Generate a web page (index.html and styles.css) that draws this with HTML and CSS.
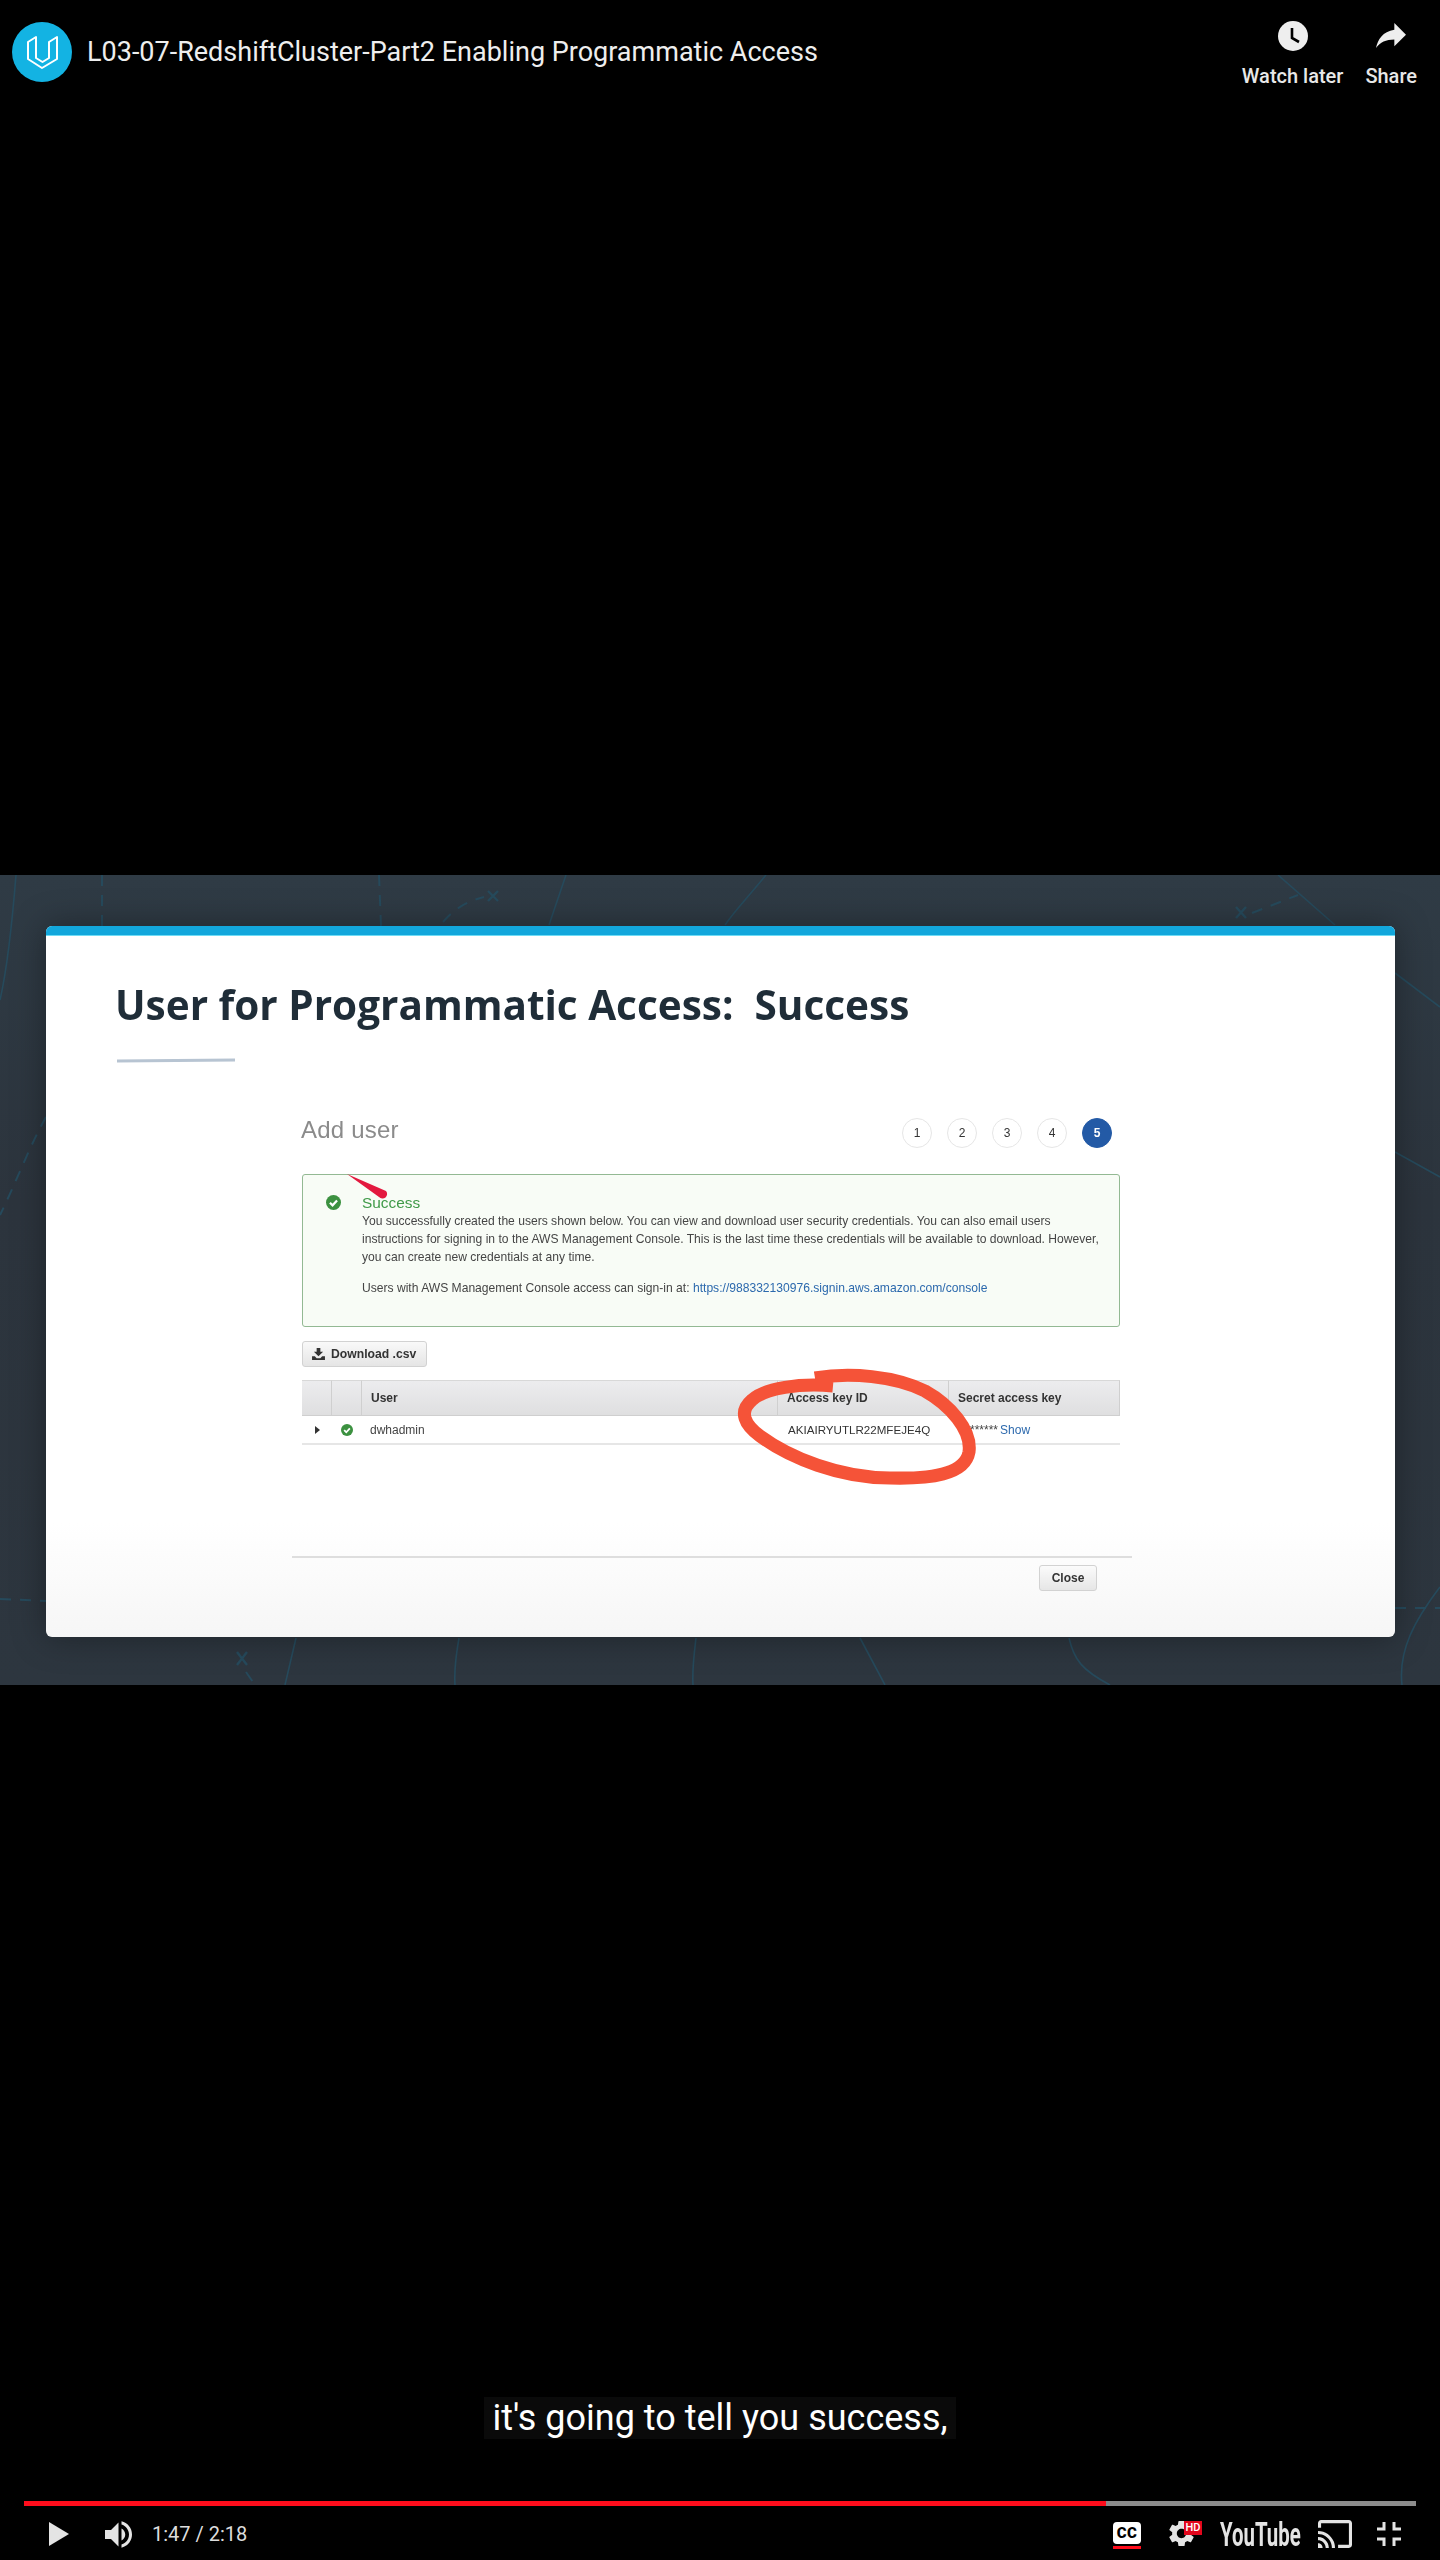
FILE: index.html
```html
<!DOCTYPE html>
<html lang="en">
<head>
<meta charset="utf-8">
<title>L03-07-RedshiftCluster-Part2 Enabling Programmatic Access</title>
<link rel="stylesheet" href="styles.css">
</head>
<body>
<div class="player">
  <main class="slide">
    <svg class="decor" viewBox="0 0 1440 810" aria-hidden="true">
      <g class="lines">
        <path d="M16 0C12 50 8 90 0 125"/>
        <path d="M566 0L549 50"/>
        <path d="M766 0C750 20 735 35 725 50"/>
        <path d="M1278 0L1335 50"/>
        <path d="M1395 98L1440 132"/>
        <path d="M1395 277L1440 302"/>
        <path d="M296 763L285 810"/>
        <path d="M459 763C456 780 454 795 455 810"/>
        <path d="M696 763C694 780 692 795 693 810"/>
        <path d="M860 763L885 810"/>
        <path d="M1069 763C1074 785 1082 795 1110 810"/>
        <path d="M1440 712C1415 745 1398 775 1402 810"/>
      </g>
      <g class="lines dashed">
        <path d="M102 0V51"/>
        <path d="M379 0L381 51"/>
        <path d="M443 47C455 33 468 26 484 22"/>
        <path d="M1252 38L1298 20"/>
        <path d="M46 242C30 270 15 310 0 340"/>
        <path d="M0 724L46 726"/>
        <path d="M1395 733H1440"/>
        <path d="M246 797L255 810"/>
      </g>
      <g class="lines thick">
        <path d="M488 16L498 26M498 16L488 26"/>
        <path d="M1236 32L1246 43M1246 32L1236 43"/>
        <path d="M237 777L247 790M247 777L237 790"/>
      </g>
    </svg>

    <section class="card">
      <div class="card-bar"></div>
      <h1 class="card-title">User for Programmatic Access:&nbsp; Success</h1>
      <div class="title-rule"></div>

      <div class="wizard-head">
        <h2 class="wizard-title">Add user</h2>
        <ol class="steps">
          <li class="step">1</li>
          <li class="step">2</li>
          <li class="step">3</li>
          <li class="step">4</li>
          <li class="step step-on">5</li>
        </ol>
      </div>

      <div class="notice">
        <svg class="check check-lg" viewBox="0 0 16 16" aria-hidden="true"><circle cx="8" cy="8" r="8"/><path d="M4.2 8.2L7 11l4.8-5.2"/></svg>
        <div class="notice-body">
          <div class="notice-title">Success</div>
          <p class="notice-text">You successfully created the users shown below. You can view and download user security credentials. You can also email users<br>instructions for signing in to the AWS Management Console. This is the last time these credentials will be available to download. However,<br>you can create new credentials at any time.</p>
          <p class="notice-text notice-link-line">Users with AWS Management Console access can sign-in at: <span class="link">https://988332130976.signin.aws.amazon.com/console</span></p>
        </div>
      </div>

      <div class="download">
        <svg class="download-icon" viewBox="0 0 14 13" aria-hidden="true"><path d="M5 0h4v4h3L7 9 2 4h3zM0 9h3l2 2h4l2-2h3v4H0z"/></svg>
        <span>Download .csv</span>
      </div>

      <div class="table">
        <div class="th"></div>
        <div class="th"></div>
        <div class="th th-text">User</div>
        <div class="th th-text">Access key ID</div>
        <div class="th th-text">Secret access key</div>
        <div class="td td-center"><span class="caret"></span></div>
        <div class="td td-center"><svg class="check check-sm" viewBox="0 0 16 16" aria-hidden="true"><circle cx="8" cy="8" r="8"/><path d="M4.2 8.2L7 11l4.8-5.2"/></svg></div>
        <div class="td td-user">dwhadmin</div>
        <div class="td td-key">AKIAIRYUTLR22MFEJE4Q</div>
        <div class="td td-secret"><span class="stars">******</span> <span class="link">Show</span></div>
      </div>

      <div class="foot">
        <button class="close" type="button">Close</button>
      </div>
    </section>

    <svg class="marks" viewBox="0 0 1440 810" aria-hidden="true">
      <path class="oval" d="M833 511C800 508 765 513 752 525C738 537 745 550 760 561C790 583 840 603 890 603C930 604 965 600 969 577C972 555 950 530 925 516C895 501 850 497 815 503"/>
      <path class="pointer" d="M347 299L386 316a4 4 0 0 1-7 6z"/>
    </svg>
  </main>

  <header class="topbar">
    <div class="brand">
      <svg class="logo" viewBox="0 0 60 60" aria-hidden="true"><circle cx="30" cy="30" r="30"/><path d="M16 20L24 15V36L30.5 40L37 36V20L45 15V37L30 46L16 37Z"/></svg>
      <div class="video-title">L03-07-RedshiftCluster-Part2 Enabling Programmatic Access</div>
    </div>
    <div class="actions">
      <div class="action">
        <svg class="action-clock" viewBox="0 0 30 30" aria-hidden="true"><circle cx="15" cy="15" r="15"/><path d="M14 7V17L21 21"/></svg>
        <span>Watch later</span>
      </div>
      <div class="action">
        <svg class="action-share" viewBox="3 5 18 15" aria-hidden="true"><path d="M14 9V5l7 7-7 7v-4.1c-5 0-8.5 1.6-11 5.1 1-5 4-10 11-11z"/></svg>
        <span>Share</span>
      </div>
    </div>
  </header>

  <div class="caption">it's going to tell you success,</div>

  <footer class="chrome">
    <div class="progress"><div class="progress-fill" style="width:77.7%"></div></div>
    <div class="controls">
      <div class="controls-left">
        <svg class="ic-play" viewBox="0 0 20 24" aria-hidden="true"><path d="M0 0L20 12L0 24z"/></svg>
        <svg class="ic-vol" viewBox="3 3 18 18" aria-hidden="true"><path d="M3 9v6h4l5 5V4L7 9H3zm13.5 3c0-1.77-1.02-3.29-2.5-4.03v8.05c1.48-.73 2.5-2.25 2.5-4.02zM14 3.23v2.06c2.89.86 5 3.54 5 6.71s-2.11 5.85-5 6.71v2.06c4.01-.91 7-4.49 7-8.77s-2.99-7.86-7-8.77z"/></svg>
        <span class="time">1:47 / 2:18</span>
      </div>
      <div class="controls-right">
        <div class="cc"><span class="cc-box">CC</span></div>
        <div class="gear">
          <svg class="ic-gear" viewBox="2.4 2.4 19.2 19.2" aria-hidden="true"><path fill-rule="evenodd" d="M19.14,12.94c0.04-0.3,0.06-0.61,0.06-0.94c0-0.32-0.02-0.64-0.07-0.94l2.03-1.58c0.18-0.14,0.23-0.41,0.12-0.61l-1.92-3.32c-0.12-0.22-0.37-0.29-0.59-0.22l-2.39,0.96c-0.5-0.38-1.03-0.7-1.62-0.94L14.4,2.81c-0.04-0.24-0.24-0.41-0.48-0.41h-3.84c-0.24,0-0.43,0.17-0.47,0.41L9.25,5.35C8.66,5.59,8.12,5.92,7.63,6.29L5.24,5.33c-0.22-0.08-0.47,0-0.59,0.22L2.74,8.87C2.62,9.08,2.66,9.34,2.86,9.48l2.03,1.58C4.84,11.36,4.8,11.69,4.8,12s0.02,0.64,0.07,0.94l-2.03,1.58c-0.18,0.14-0.23,0.41-0.12,0.61l1.92,3.32c0.12,0.22,0.37,0.29,0.59,0.22l2.39-0.96c0.5,0.38,1.03,0.7,1.62,0.94l0.36,2.54c0.05,0.24,0.24,0.41,0.48,0.41h3.84c0.24,0,0.44-0.17,0.47-0.41l0.36-2.54c0.59-0.24,1.13-0.56,1.62-0.94l2.39,0.96c0.22,0.08,0.47,0,0.59-0.22l1.92-3.32c0.12-0.22,0.07-0.47-0.12-0.61L19.14,12.94z M12,15.6c-1.98,0-3.6-1.62-3.6-3.6s1.62-3.6,3.6-3.6s3.6,1.62,3.6,3.6S13.98,15.6,12,15.6z"/></svg>
          <span class="hd">HD</span>
        </div>
        <div class="yt"><span class="yt-word">YouTube</span></div>
        <svg class="ic-cast" viewBox="1 3 22 18" aria-hidden="true"><path d="M21 3H3c-1.1 0-2 .9-2 2v3h2V5h18v14h-7v2h7c1.1 0 2-.9 2-2V5c0-1.1-.9-2-2-2zM1 18v3h3c0-1.66-1.34-3-3-3zm0-4v2c2.76 0 5 2.24 5 5h2c0-3.87-3.13-7-7-7zm0-4v2c4.97 0 9 4.03 9 9h2c0-6.08-4.93-11-11-11z"/></svg>
        <svg class="ic-exit" viewBox="0 0 24 24" aria-hidden="true"><path d="M0 7H7V0M17 0V7H24M0 17H7V24M17 24V17H24"/></svg>
      </div>
    </div>
  </footer>
</div>
</body>
</html>
```

FILE: styles.css
```css
* { box-sizing: border-box; }
html, body { margin: 0; padding: 0; background: #000; }
body { font-family: "Liberation Sans", Arial, sans-serif; }

.player {
  position: relative;
  width: 1440px;
  height: 2560px;
  background: #000;
  display: flex;
  align-items: center;
  overflow: hidden;
}

/* Video frame */
.slide {
  position: relative;
  width: 1440px;
  height: 810px;
  padding: 51px 45px 48px 46px;
  background: linear-gradient(180deg, #2f3b45 0%, #2c343d 40%, #2d363f 100%);
  filter: blur(0.45px);
}
.decor, .marks {
  position: absolute;
  left: 0;
  top: 0;
  width: 1440px;
  height: 810px;
  pointer-events: none;
}
.lines { fill: none; stroke: #264a5c; stroke-width: 1.6; }
.dashed { stroke-dasharray: 11 9; stroke-width: 2; }
.thick { stroke-width: 2.4; }
.oval { fill: none; stroke: #f55338; stroke-width: 13; stroke-linecap: butt; }
.pointer { fill: #e3193f; }

.card {
  position: relative;
  width: 1349px;
  height: 711px;
  border-radius: 6px;
  overflow: hidden;
  background: linear-gradient(180deg, #fff 0%, #fff 84%, #f6f6f6 100%);
  box-shadow: 0 0 34px rgba(0, 0, 0, 0.35);
}
.card-bar {
  height: 10px;
  background: #12a7dc;
  border-bottom: 1px solid #6fdcf5;
}
.card-title {
  margin: 44px 0 0 69px;
  font: 700 40.5px/50px "Open Sans", sans-serif;
  color: #1f2d38;
  white-space: nowrap;
}
.title-rule {
  width: 118px;
  height: 3px;
  margin: 29px 0 0 71px;
  background: #b7c4d2;
  transform: rotate(-0.4deg);
}

.wizard-head {
  width: 818px;
  height: 30px;
  margin: 56px 0 0 256px;
  display: flex;
  justify-content: space-between;
  align-items: center;
}
.wizard-title {
  align-self: flex-start;
  margin: 0 0 0 -1px;
  font-size: 24px;
  font-weight: 400;
  line-height: 24px;
  letter-spacing: 0.2px;
  color: #8b8b8b;
}
.steps {
  display: flex;
  gap: 15px;
  list-style: none;
  margin: 0;
  padding: 0 8px 0 0;
}
.step {
  width: 30px;
  height: 30px;
  border-radius: 50%;
  border: 1px solid #e6e6e6;
  display: flex;
  align-items: center;
  justify-content: center;
  font-size: 12px;
  color: #333;
}
.step-on { background: #235aa6; border-color: #235aa6; color: #fff; font-weight: 700; }

.notice {
  width: 818px;
  height: 153px;
  margin: 26px 0 0 256px;
  padding: 19px 0 0 23px;
  display: flex;
  gap: 21px;
  background: #f8fcf6;
  border: 1.5px solid #93b993;
  border-radius: 3px;
}
.check { display: block; flex: none; }
.check circle { fill: #3c9140; }
.check path { fill: none; stroke: #fff; stroke-width: 2.4; }
.check-lg { width: 15px; height: 15px; margin-top: 1px; }
.check-sm { width: 12px; height: 12px; }
.notice-title { font-size: 15.4px; line-height: 18px; color: #3f9a48; }
.notice-text { margin: 0; font-size: 12.1px; line-height: 18px; color: #454545; white-space: nowrap; }
.notice-link-line { margin-top: 13px; }
.link { color: #2c69ad; }

.download {
  width: 125px;
  height: 26px;
  margin: 14px 0 0 256px;
  padding-left: 9px;
  display: flex;
  align-items: center;
  gap: 6px;
  border: 1px solid #d2d2d2;
  border-radius: 3px;
  background: linear-gradient(180deg, #f9f9f9, #e5e5e5);
  font-size: 12.2px;
  font-weight: 700;
  color: #333;
}
.download-icon { width: 13px; height: 12px; fill: #333; flex: none; }

.table {
  width: 818px;
  margin: 13px 0 0 256px;
  display: grid;
  grid-template-columns: 30px 30px 416px 171px 171px;
  grid-template-rows: 36px 29px;
}
.th {
  background: linear-gradient(180deg, #ececee, #dfdfe0);
  border-top: 1px solid #d8d8d8;
  border-bottom: 1px solid #cfcfcf;
  border-right: 1px solid #cfcfcf;
}
.th-text {
  display: flex;
  align-items: center;
  padding-left: 9px;
  font-size: 12px;
  font-weight: 700;
  color: #333;
}
.td {
  display: flex;
  align-items: center;
  border-bottom: 2px solid #e6e6e6;
  font-size: 12px;
  color: #444;
}
.td-center { justify-content: center; }
.td-user { padding-left: 8px; }
.td-key { padding-left: 10px; font-size: 11.6px; color: #333; }
.td-secret { padding-left: 21px; gap: 2px; }
.stars { letter-spacing: 0; }
.caret {
  width: 0;
  height: 0;
  border-left: 5px solid #333;
  border-top: 4px solid transparent;
  border-bottom: 4px solid transparent;
}

.foot {
  width: 840px;
  margin: 111px 0 0 246px;
  padding: 7px 35px 0 0;
  display: flex;
  justify-content: flex-end;
  border-top: 2px solid #dedede;
}
.close {
  width: 58px;
  height: 26px;
  padding: 0;
  border: 1px solid #d2d2d2;
  border-radius: 3px;
  background: linear-gradient(180deg, #fbfbfb, #e6e6e6);
  font: 700 12px "Liberation Sans", Arial, sans-serif;
  color: #333;
}

/* Top overlay */
.topbar {
  position: absolute;
  left: 0;
  top: 0;
  width: 1440px;
  display: flex;
  justify-content: space-between;
  align-items: flex-start;
  padding: 21px 23px 0 12px;
}
.brand { display: flex; align-items: center; gap: 15px; margin-top: 1px; }
.logo { width: 60px; height: 60px; display: block; }
.logo circle { fill: #13b3e3; }
.logo path { fill: none; stroke: #fff; stroke-width: 2; stroke-linejoin: round; }
.video-title {
  font: 400 27px/60px Roboto, sans-serif;
  color: #eee;
  white-space: nowrap;
}
.actions { display: flex; gap: 22px; color: #e8e8e8; }
.action {
  display: flex;
  flex-direction: column;
  align-items: center;
  font: 500 20px/24px Roboto, sans-serif;
  white-space: nowrap;
}
.action-clock { width: 30px; height: 30px; display: block; margin-bottom: 13px; }
.action-clock circle { fill: #eee; }
.action-clock path { fill: none; stroke: #000; stroke-width: 2.6; }
.action-share { width: 30px; height: 25px; display: block; margin: 2px 0 16px; fill: #eee; }

/* Caption */
.caption {
  position: absolute;
  left: 484px;
  top: 2397px;
  width: 472px;
  height: 42px;
  background: #0a0a0a;
  color: #fff;
  font: 400 36px/42px Roboto, sans-serif;
  text-align: center;
  white-space: nowrap;
}

/* Bottom chrome */
.chrome {
  position: absolute;
  left: 0;
  top: 2501px;
  width: 1440px;
}
.progress {
  width: 1392px;
  height: 5px;
  margin-left: 24px;
  background: #8c8c8c;
}
.progress-fill { height: 5px; background: #ff0d1c; }
.controls {
  height: 30px;
  margin-top: 13px;
  padding: 0 39px 0 49px;
  display: flex;
  justify-content: space-between;
  align-items: center;
  color: #e4e4e4;
}
.controls-left, .controls-right { display: flex; align-items: center; }
.ic-play { width: 20px; height: 24px; fill: #e4e4e4; margin-right: 36px; }
.ic-vol { width: 27px; height: 27px; fill: #e4e4e4; margin-right: 20px; }
.time { font: 400 20px/24px Roboto, sans-serif; color: #ddd; white-space: nowrap; }
.cc {
  width: 28px;
  height: 30px;
  padding-top: 3px;
  border-bottom: 3px solid #ff0d1c;
  margin-right: 28px;
}
.cc-box {
  display: block;
  width: 28px;
  height: 22px;
  border-radius: 4px;
  background: #fff;
  color: #000;
  font: 900 15px/22px Roboto, sans-serif;
  text-align: center;
  letter-spacing: 0.5px;
}
.gear { position: relative; width: 34px; height: 26px; margin-right: 17px; }
.ic-gear { width: 25px; height: 25px; fill: #e4e4e4; display: block; }
.hd {
  position: absolute;
  left: 15px;
  top: 0;
  width: 18px;
  height: 14px;
  background: #e2061c;
  color: #fff;
  font: 500 11px/14px Roboto, sans-serif;
  text-align: center;
}
.yt { width: 78px; height: 28px; margin-right: 20px; overflow: visible; }
.yt-word {
  display: block;
  font: 700 34px/28px Roboto, sans-serif;
  color: #e4e4e4;
  transform: scaleX(0.6);
  transform-origin: left center;
  white-space: nowrap;
}
.ic-cast { width: 34px; height: 28px; fill: #e4e4e4; margin-right: 25px; }
.ic-exit { width: 24px; height: 24px; fill: none; stroke: #e4e4e4; stroke-width: 3; }
```
